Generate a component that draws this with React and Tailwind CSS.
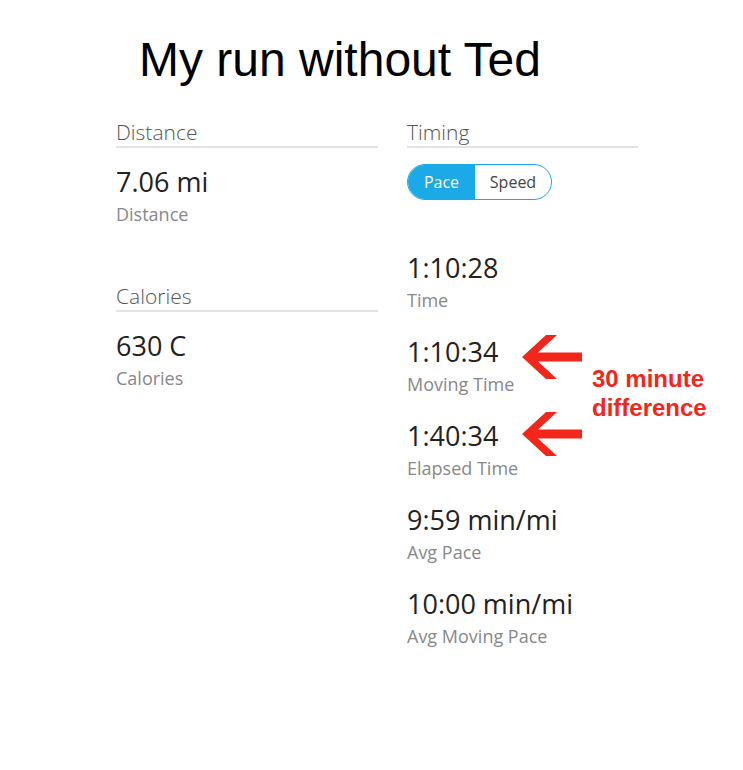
import React from "react";

const sans = { fontFamily: '"Open Sans", "Noto Sans", sans-serif' };

function Header({ children }) {
  return (
    <div className="text-[21px] leading-[28px] font-light text-[#555] border-b-2 border-[#e3e3e3]">
      {children}
    </div>
  );
}

function Stat({ value, label, className = "" }) {
  return (
    <div className={className}>
      <div className="text-[27px] leading-[32px] text-[#222]">{value}</div>
      <div className="mt-1 text-[18px] leading-[24px] text-[#888]">{label}</div>
    </div>
  );
}

function Arrow({ className }) {
  return (
    <svg className={className} width="64" height="48" viewBox="0 0 64 48">
      <polygon
        points="2,24 26,2 37,2 18,19.5 62,19.5 62,28.5 18,28.5 37,46 26,46"
        fill="#f3261b"
      />
    </svg>
  );
}

export default function App() {
  const timing = [
    ["1:10:34", "Moving Time"],
    ["1:40:34", "Elapsed Time"],
    ["9:59 min/mi", "Avg Pace"],
    ["10:00 min/mi", "Avg Moving Pace"],
  ];

  return (
    <div className="w-[743px] h-[770px] bg-white">
      <h1
        className="pt-[28px] pl-[139px] text-[48px] leading-[64px] text-black"
        style={{ fontFamily: '"Liberation Sans", Arial, sans-serif' }}
      >
        My run without Ted
      </h1>

      <div className="mt-[26px] pl-[116px] flex gap-[29px]" style={sans}>
        {/* left column */}
        <div className="w-[262px]">
          <Header>Distance</Header>
          <Stat className="mt-[18px]" value="7.06 mi" label="Distance" />
          <div className="mt-[56px]">
            <Header>Calories</Header>
          </div>
          <Stat className="mt-[18px]" value="630 C" label="Calories" />
        </div>

        {/* right column */}
        <div className="relative w-[231px]">
          <Header>Timing</Header>
          <div className="mt-[16px] flex w-[145px] h-[36px] rounded-full border-[1.5px] border-[#1ba9e8] overflow-hidden text-[16px]">
            <div className="w-[67px] flex items-center justify-center bg-[#1ba9e8] text-white">Pace</div>
            <div className="flex-1 flex items-center justify-center text-[#444]">Speed</div>
          </div>

          <Stat className="mt-[52px]" value="1:10:28" label="Time" />
          {timing.map(([v, l]) => (
            <Stat key={l} className="mt-[24px]" value={v} label={l} />
          ))}

          {/* annotation overlay */}
          <Arrow className="absolute left-[113px] top-[215px]" />
          <Arrow className="absolute left-[113px] top-[292px]" />
          <div
            className="absolute left-[185px] top-[246px] w-[150px] text-[24px] leading-[29px] font-bold text-[#f3261b]"
            style={{ fontFamily: '"Liberation Sans", Arial, sans-serif' }}
          >
            30 minute
            <br />
            difference
          </div>
        </div>
      </div>
    </div>
  );
}
